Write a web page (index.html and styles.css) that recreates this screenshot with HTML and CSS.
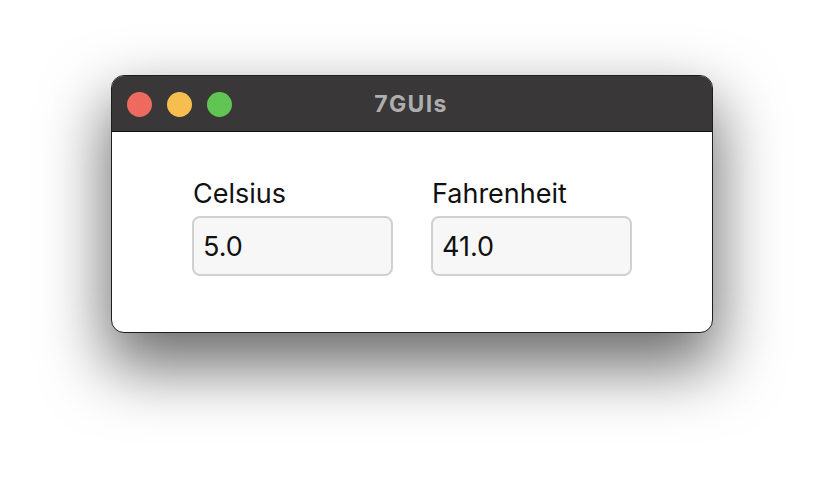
FILE: index.html
```html
<!DOCTYPE html>
<html>
<head>
<meta charset="utf-8">
<link rel="stylesheet" href="styles.css">
</head>
<body>
<div class="window">
  <div class="titlebar">
    <div class="lights">
      <span class="light red"></span>
      <span class="light yellow"></span>
      <span class="light green"></span>
    </div>
    <div class="title">7GUIs</div>
  </div>
  <div class="content">
    <label class="field">
      <span class="label">Celsius</span>
      <span class="input">5.0</span>
    </label>
    <label class="field">
      <span class="label">Fahrenheit</span>
      <span class="input">41.0</span>
    </label>
  </div>
</div>
</body>
</html>
```
FILE: styles.css
```css
html, body {
  margin: 0;
  padding: 0;
  background: #ffffff;
  width: 824px;
  height: 480px;
  overflow: hidden;
}
body {
  padding-top: 75px;
  box-sizing: border-box;
  font-family: Inter, "Noto Sans", sans-serif;
}
.window {
  width: 602px;
  height: 258px;
  margin-left: 111px;
  box-sizing: border-box;
  border: 1px solid #1e1e1e;
  border-radius: 13px;
  overflow: hidden;
  background: #ffffff;
  box-shadow: 0 30px 65px 4px rgba(0, 0, 0, 0.58);
  display: flex;
  flex-direction: column;
}
.titlebar {
  height: 55px;
  background: #393738;
  border-bottom: 1px solid #111;
  position: relative;
  display: flex;
  align-items: center;
  justify-content: center;
  flex-shrink: 0;
}
.lights {
  position: absolute;
  left: 15px;
  top: 16px;
  display: flex;
  gap: 15px;
}
.light {
  width: 25px;
  height: 25px;
  border-radius: 50%;
  display: block;
}
.red { background: #ee6a5e; }
.yellow { background: #f5be4f; }
.green { background: #61c554; }
.title {
  color: #aeaeae;
  font-weight: 700;
  font-size: 23px;
  letter-spacing: 1.3px;
  padding-right: 2px;
}
.content {
  flex: 1;
  display: flex;
  gap: 38px;
  padding: 47px 0 0 80px;
}
.field {
  display: flex;
  flex-direction: column;
  gap: 7px;
}
.label {
  font-size: 27px;
  color: #111;
  line-height: 30px;
  padding-left: 1px;
}
.input {
  width: 201px;
  height: 60px;
  box-sizing: border-box;
  border: 2px solid #d0d0d0;
  border-radius: 8px;
  background: #f7f7f7;
  font-size: 27px;
  color: #111;
  padding-left: 9px;
  display: flex;
  align-items: center;
}
```
